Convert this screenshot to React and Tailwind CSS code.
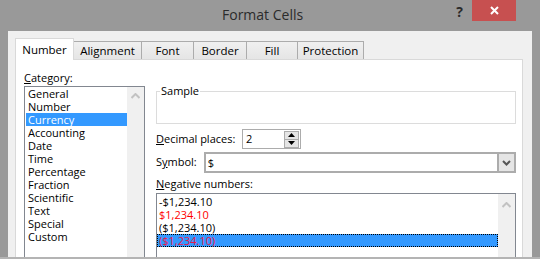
import React from "react";

const cats = ["General","Number","Currency","Accounting","Date","Time","Percentage","Fraction","Scientific","Text","Special","Custom"];

function UpArrow({ color = "#c2c2c2" }) {
  return (
    <svg width="9" height="6" viewBox="0 0 9 6">
      <path d="M0.5 5 L4.5 1 L8.5 5" fill="none" stroke={color} strokeWidth="2" />
    </svg>
  );
}

export default function App() {
  const tabs = [
    { t: "Number", w: "w-[59px]", active: true },
    { t: "Alignment", w: "w-[69px]" },
    { t: "Font", w: "w-[53px]" },
    { t: "Border", w: "w-[54px]" },
    { t: "Fill", w: "w-[52px]" },
    { t: "Protection", w: "w-[67px]" },
  ];
  return (
    <div className="w-[540px] h-[259px] bg-[#999999] flex flex-col overflow-hidden font-['Open_Sans',sans-serif] text-[11px] text-black">
      {/* title bar */}
      <div className="h-[31px] shrink-0 flex items-start">
        <div className="ml-[222px] mt-[5px] text-[14px] leading-[20px] text-[#2b2b2b]">Format Cells</div>
        <div className="ml-auto mt-[3px] mr-[9px] text-[14px] font-bold leading-[18px] text-[#2b2b2b]">?</div>
        <div className="w-[44px] h-[21px] bg-[#c75050] mr-[24px] flex items-center justify-center">
          <svg width="9" height="9" viewBox="0 0 9 9">
            <path d="M1 1 L8 8 M8 1 L1 8" stroke="white" strokeWidth="2" />
          </svg>
        </div>
      </div>
      {/* body */}
      <div className="flex-1 mx-[8px] bg-[#f0f0f0] pt-[7px] pl-[7px] pr-[9px] flex flex-col min-h-0">
        <div className="h-[21px] shrink-0 flex items-end">
          {tabs.map((tb) => (
            <div
              key={tb.t}
              className={
                tb.active
                  ? `${tb.w} h-[22px] -mb-px relative z-10 bg-white border border-b-0 border-[#d9d9d9] flex items-center justify-center leading-[14px] text-[11.5px]`
                  : `${tb.w} h-[18px] -ml-px bg-gradient-to-b from-[#f0f0f0] to-[#e5e5e5] border border-b-0 border-[#acacac] flex items-center justify-center leading-[14px] text-[11.5px]`
              }
            >
              {tb.t}
            </div>
          ))}
        </div>
        <div className="flex-1 min-h-0 bg-white border border-b-0 border-[#d9d9d9] flex items-start pl-[8px] pt-[9px] overflow-hidden">
          {/* left column */}
          <div className="w-[121px] shrink-0 flex flex-col">
            <div className="h-[17px] shrink-0 leading-[17px]"><span className="underline">C</span>ategory:</div>
            <div className="h-[200px] shrink-0 border border-[#828790] flex">
              <div className="flex-1 pl-[1px]">
                {cats.map((c) => (
                  <div
                    key={c}
                    className={`h-[13px] leading-[13px] pl-[2px] ${c === "Currency" ? "bg-[#3399ff] text-white" : ""}`}
                  >
                    {c}
                  </div>
                ))}
              </div>
              <div className="w-[17px] bg-[#f0f0f0] flex justify-center pt-[6px]">
                <UpArrow />
              </div>
            </div>
          </div>
          {/* right column */}
          <div className="ml-[11px] w-[360px] shrink-0 flex flex-col">
            <div className="mt-[22px] h-[33px] shrink-0 border border-[#dcdcdc] relative">
              <span className="absolute left-[3px] top-[-9px] bg-white px-[1px] leading-[15px]">Sample</span>
            </div>
            <div className="mt-[5px] shrink-0 flex items-center h-[20px]">
              <div className="w-[86px]"><span className="underline">D</span>ecimal places:</div>
              <div className="w-[59px] h-[20px] border border-[#acacac] flex items-center">
                <div className="flex-1 pl-[3px]">2</div>
                <div className="w-[15px] h-[17px] mr-[1px] flex flex-col">
                  <div className="flex-1 bg-[#e5e5e5] border border-[#acacac] flex items-center justify-center">
                    <svg width="7" height="4" viewBox="0 0 7 4"><path d="M0 4 L3.5 0 L7 4 Z" fill="#000" /></svg>
                  </div>
                  <div className="flex-1 -mt-px bg-[#e5e5e5] border border-[#acacac] flex items-center justify-center">
                    <svg width="7" height="4" viewBox="0 0 7 4"><path d="M0 0 L3.5 4 L7 0 Z" fill="#000" /></svg>
                  </div>
                </div>
              </div>
            </div>
            <div className="mt-[3px] shrink-0 flex items-center h-[21px]">
              <div className="w-[48px]">S<span className="underline">y</span>mbol:</div>
              <div className="w-[313px] h-[21px] border-2 border-[#acacac] flex items-stretch">
                <div className="flex-1 pl-[2px] leading-[17px]">$</div>
                <div className="w-[17px] bg-[#e5e5e5] border-l-2 border-[#acacac] flex items-center justify-center">
                  <svg width="9" height="6" viewBox="0 0 9 6">
                    <path d="M1 1 L4.5 4.5 L8 1" fill="none" stroke="#555" strokeWidth="2" />
                  </svg>
                </div>
              </div>
            </div>
            <div className="mt-[3px] shrink-0 h-[16px] leading-[16px]"><span className="underline">N</span>egative numbers:</div>
            <div className="mt-[1px] shrink-0 h-[100px] border border-[#828790] flex">
              <div className="flex-1 pt-[1px]">
                <div className="h-[13px] leading-[11px] border border-transparent pl-[1px]">-$1,234.10</div>
                <div className="h-[13px] leading-[11px] border border-transparent pl-[1px] text-[#ff0000]">$1,234.10</div>
                <div className="h-[13px] leading-[11px] border border-transparent pl-[1px]">($1,234.10)</div>
                <div className="h-[13px] leading-[11px] border border-dotted border-black pl-[1px] bg-[#3399ff] text-[#e8174d]">($1,234.10)</div>
              </div>
              <div className="w-[17px] bg-[#f0f0f0] flex justify-center pt-[8px]">
                <UpArrow />
              </div>
            </div>
          </div>
        </div>
      </div>
      <div className="h-[2px] shrink-0 bg-[#b4b4b4]" />
    </div>
  );
}
